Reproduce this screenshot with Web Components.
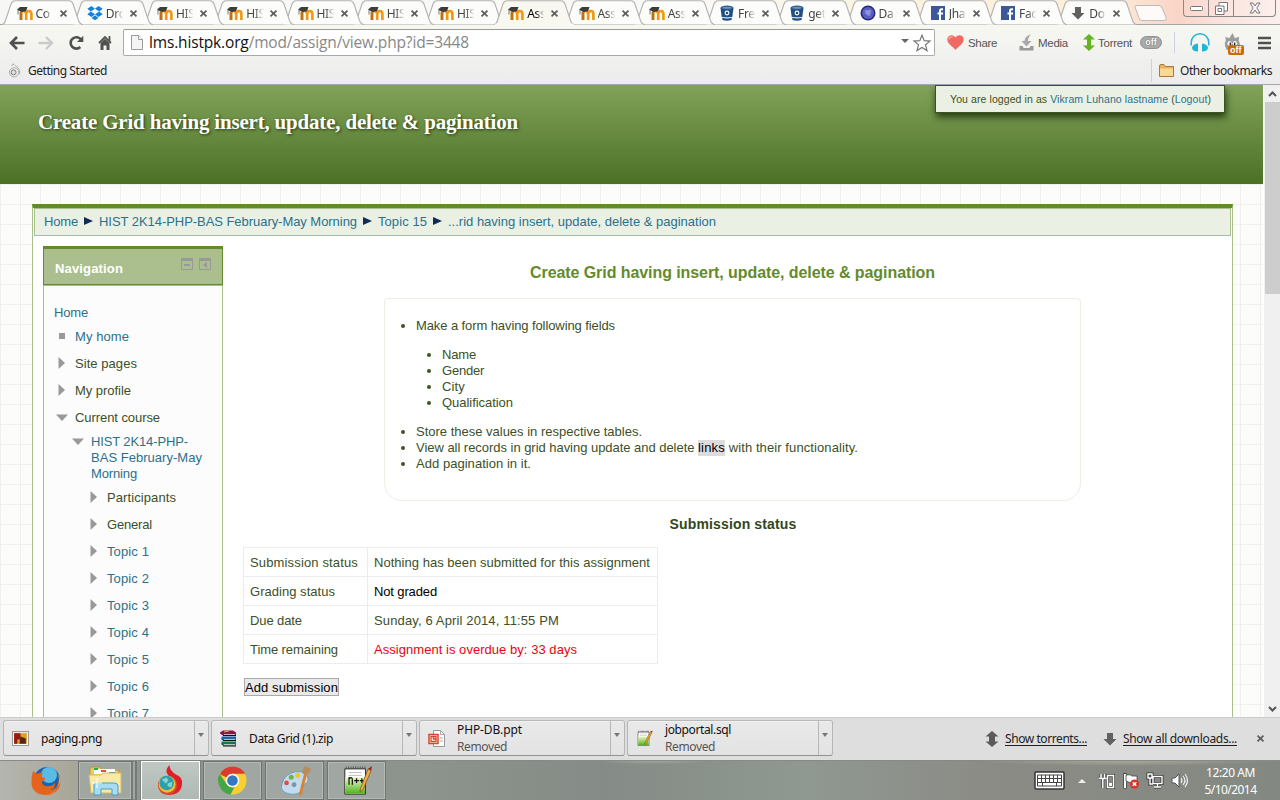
<!DOCTYPE html>
<html lang="en"><head><meta charset="utf-8"><title>Create Grid having insert, update, delete &amp; pagination</title>
<style>html,body{margin:0;width:1280px;height:800px;overflow:hidden;background:#fff}</style></head>
<body><desktop-screen></desktop-screen>
<script>
const make=(name,css,html)=>customElements.define(name,class extends HTMLElement{
  constructor(){super();this.attachShadow({mode:'open'})}
  connectedCallback(){if(!this.shadowRoot.firstChild)this.shadowRoot.innerHTML=`<style>*{box-sizing:border-box}:host{box-sizing:border-box;display:block}${css}</style>`+(typeof html==='function'?html(this):html)}
});
const f=(w,t,c='')=>`<fit-text w="${w}" class="${c}">${t}</fit-text>`;
const icon=(n,w=16,h=w)=>`<ui-icon name="${n}" w="${w}" h="${h}"></ui-icon>`;
const notepad='<path d="M3 4H25V31H3z" fill="#fff" stroke="#222"/><path d="M3.5 13H24.500V30.500H3.500z" fill="url(#ng)"/><path d="M4 3h21" stroke="#555" stroke-width="3" stroke-dasharray="1 1.500"/><path d="M7 8h14M7 11h14" stroke="#bbb"/>';
const ICONS={
moodle:['0 0 16 16','<path d="M4 15V8.500Q4 6 6.500 6T9.200 9v6M9.200 9q0-3 2.600-3T14.400 9v6" fill="none" stroke="#f09a14" stroke-width="2.700"/><path d="M2.700 6.500h2.600V15H2.700z" fill="#b5731c"/><path d="M0 4.500L3 2 10.500 2 9 6.300 5 7 1.500 5.500z" fill="#3c3c3c"/><path d="M1 5v4.500" stroke="#777"/>'],
dropbox:['0 0 16 16','<path d="M4.500 1L8 3.800 3.800 6.500.3 3.800zM11.500 1L8 3.800l4.200 2.700 3.500-2.700zM3.800 6.500L8 9.300 4.500 12 .3 9.200zM12.200 6.500L8 9.300l3.500 2.700 4.200-2.800zM4.500 13L8 10.200l3.500 2.800L8 15.300z" fill="#1081e0"/>'],
bitbucket:['0 0 16 16','<path d="M1.500 3l1.200 9h10.600l1.200-9z" fill="#205081"/><ellipse cx="8" cy="2.800" rx="6.500" ry="2.200" fill="#2a5b90"/><ellipse cx="8" cy="2.700" rx="4.600" ry="1" fill="#6f93b8"/><path d="M3 12.500h10l-.5 2.500q-4.500 1.600-9 0z" fill="#205081"/><path d="M3 12.400q5 1.600 10 0" stroke="#fff" fill="none" stroke-width=".7"/><circle cx="8" cy="8" r="1.900" fill="#205081" stroke="#fff" stroke-width="1.100"/>'],
orb:['0 0 16 16','<circle cx="8" cy="8" r="7.500" fill="#27277d"/><circle cx="8" cy="8" r="6" fill="#5a5ec0"/><path d="M5 5.500h6l-1.500 5Q5 10 5 5.500z" fill="#8d95df" stroke="#8188d8"/>'],
facebook:['0 0 16 16','<rect x="1" y="1" width="14" height="14" fill="#3b5998"/><path d="M13 4.300h-1.300Q10 4.300 10 6v9M7.500 8.500H13" fill="none" stroke="#fff" stroke-width="2"/>'],
down:['0 0 16 16','<path d="M5 2h6v6h3.500L8 14.500 1.500 8H5z" fill="#606060"/>'],
updown:['0 0 14 16','<path d="M7 0l6.500 5.500H10v5h3.500L7 16 .5 10.500H4v-5H.5z" fill="#5a5a5a"/>'],
close:['0 0 10 10','<path d="M1.700 1.700l6.600 6.600M8.300 1.700L1.700 8.300" stroke="#5d5d5d" stroke-width="1.900"/>'],
back:['0 0 16 14','<path d="M15.500 7H2.500M8 1L2 7l6 6" fill="none" stroke="#505050" stroke-width="2.700"/>'],
fwd:['0 0 16 14','<path d="M.5 7h13M8 1l6 6-6 6" fill="none" stroke="#cacaca" stroke-width="2.400"/>'],
reload:['0 0 16 16','<path d="M12.300 12A5.700 5.700 0 1 1 13 4.600" fill="none" stroke="#505050" stroke-width="2.600"/><path d="M15.300.8V7H9z" fill="#505050"/>'],
home:['0 0 14 15','<path d="M1 8L7 2l6 6M11.500 1v5" fill="none" stroke="#555" stroke-width="1.800"/><path d="M2.500 8L7 3.700 11.500 8v7h-3v-4.500h-3V15h-3z" fill="#505050"/>'],
page:['0 0 12 15','<path d="M.5.5h7l4 4v10H.5z" fill="#f4f4f4" stroke="#999"/><path d="M7.500.5v4h4" fill="#fff" stroke="#999"/>'],
star:['0 0 18 18','<path d="M9 1.200l2.200 5.500 5.800.4-4.500 3.700 1.500 5.800L9 13.400 4 16.600l1.500-5.800L1 7.100l5.800-.4z" fill="#fff" stroke="#777" stroke-width="1.200"/>'],
heart:['0 0 17 16','<path d="M8.500 15.500C6 12-.3 9 .3 4.500.8.500 6-.8 8.500 3 11-.8 16.300.5 16.700 4.500 17.200 9 11 12 8.500 15.500z" fill="#ee6a62"/><path d="M2.200 5Q2.500 2 5.500 2.500" stroke="#f7a6a0" stroke-width="1.500" fill="none"/>'],
media:['0 0 15 17','<path d="M.5 12h3l1 2h6l1-2h3v4.500H.5z" fill="#9a9a9a"/><path d="M12 .5Q6 1.500 5.500 7H2.500l5 5.500 5-5.500H9Q9 3 12 .5z" fill="#a9a9a9"/>'],
torrent:['0 0 12 17','<path d="M6 0l6 5.500H8v6h4L6 17 0 11.500h4v-6H0z" fill="#62b51c"/>'],
headphones:['0 0 20 19','<path d="M1.200 12.500V9.500a8.800 8.800 0 0 1 17.600 0V12.500" stroke="#21b4d3" stroke-width="1.500" fill="none"/><path d="M8 10.500v8Q2 18.500 2 14.500 3 11 8 10.500zM12 10.500v8q6 0 6-4-1-3.500-6-4z" fill="#21b4d3"/>'],
menu:['0 0 13 14','<path d="M0 2h13M0 7h13M0 12h13" stroke="#505050" stroke-width="2.700"/>'],
ghost:['0 0 17 20','<path d="M2.500 18Q-1 12 1.500 8L1 4l4 1.500L8.500 0 11 5.500 15.500 4 15 8q3 6-.5 10z" fill="#9c9c9c"/><ellipse cx="5.500" cy="11" rx="2.300" ry="2.700" fill="#fff"/><ellipse cx="11" cy="11" rx="2.300" ry="2.700" fill="#fff"/><path d="M5.500 10H7v3H5.500zM10 10h1.500v3H10z" fill="#222"/>'],
torch:['0 0 14 16','<circle cx="6.500" cy="10" r="5" fill="#eee" stroke="#aaa"/><circle cx="6" cy="10" r="2.700" fill="#ddd" stroke="#777"/><path d="M4 3Q5-.500 6.500 1.500T10 4q4 4 2.500 8" fill="none" stroke="#aaa"/>'],
folder:['0 0 15 13','<path d="M.5 2Q.5.5 2 .5h3l1.500 2h8v10H.5z" fill="#e9b35e" stroke="#a9793a"/><path d="M1 4.500h13v7.500H1z" fill="#fbd995"/>'],
tri:['0 0 7 12','<path d="M.5 0L7 6 .5 12z" fill="#999"/>'],
trid:['0 0 12 7','<path d="M0 .5h12L6 7z" fill="#999"/>'],
square:['0 0 6 6','<path d="M0 0h6v6H0z" fill="#999"/>'],
min:['0 0 12 12','<path d="M.5.500h11v11H.500z" fill="none" stroke="#999"/><path d="M0 0h12v3H0zM3 6h6v2H3z" fill="#999"/>'],
dock:['0 0 12 12','<path d="M.5.500h11v11H.500z" fill="none" stroke="#999"/><path d="M0 0h12v3H0zM8 4v6L4 7z" fill="#999"/>'],
crumb:['0 0 9 8','<path d="M0 0L9 4 0 8z" fill="#112c54"/>'],
png:['0 0 16 16','<path d="M.5 1.500h15v13H.500z" fill="#fff" stroke="#999"/><path d="M2 3h12v10H2z" fill="#d9a128"/><path d="M2 3h6v6H5v4H2z" fill="#941a16"/><path d="M8 6l5 2v5H7z" fill="#5a2410"/>'],
zip:['0 0 17 16','<path d="M0 2l3-2h10l3 2v3H3L0 3z" fill="#8d134d"/><path d="M2 6h14v4H3Q0 9 2 6z" fill="#1d62ae"/><path d="M2 11h14v4H3q-3-1-1-4z" fill="#127b43"/><path d="M3 5h13M3 10h13M3 15.500h13" stroke="#111"/><path d="M4 4h11M4 9h11M4 14h11" stroke="#ddd" stroke-width=".8"/><path d="M4 1.500l5-1" stroke="#d9b23c"/>'],
ppt:['0 0 17 17','<path d="M5.500.5h7l4 4v12h-11z" fill="#fff" stroke="#999"/><path d="M12.500.500v4h4M12 8h3M12 11h3" fill="none" stroke="#aaa"/><path d="M1 4.500h9v9H1z" fill="#fff" stroke="#d24726" stroke-width="1.500"/><path d="M3 6.500h5v5H3zM5.500 7v2h2" fill="none" stroke="#d24726" stroke-width="1.300"/>'],
sql:['0 0 32 34',notepad+'<path d="M28 3L17 24l-1 5 4-3L31 5z" fill="#eca824" stroke="#80511a"/><path d="M28 3l3 2 1-4z" fill="#9a2020"/>'],
npp:['0 0 32 34',notepad+'<path d="M7.500 21v-8M7.500 14.500q3.500-2.500 3.500 1V21M13 16.500h5M15.500 14v5M19 16.500h4.500M21.200 14v5" stroke="#111" stroke-width="1.300" fill="none"/><path d="M28 4l-8 20-1 5 3.500-3L31 6z" fill="#eab044" stroke="#80511a" stroke-width=".8"/><path d="M28 4l3 2 1-5z" fill="#9a2020"/>'],
firefox:['0 0 30 30','<circle cx="16" cy="14" r="13" fill="#1c62b2"/><circle cx="18" cy="9" r="8" fill="#59bce5"/><path d="M2 5l4 3q3-2 6-1-2 2-1 4 4 1 3 3-3 0-3 3 2 4 7 3 5 0 6-4 1 7-6 8 7 0 9-6 2-6 0-10 4 8 1 14-5 8-14 7Q1 28 .500 17 0 11 2 5z" fill="#e5641c"/><path d="M27 7q4 9-1 16-4 5-11 6 9-1 12-8 2-6 0-14z" fill="#f9c431"/>'],
explorer:['0 0 32 30','<path d="M1 3q0-2 2-2h8l2 3h17v20H1z" fill="#e5c963" stroke="#b69742"/><path d="M5 3h21v5H5z" fill="#fff"/><path d="M5 2h4v2H5z" fill="#27ad41"/><path d="M12 4h5v2h-5z" fill="#e64c35"/><path d="M20 6h6v2h-6z" fill="#3287d5"/><path d="M0 9h12l2-2h18v20H2z" fill="#f8e9a4" stroke="#d5bc69"/><path d="M5 29V19q0-2 3-2h17q4 0 4 3v9h-6v-6H12v6z" fill="#a7dcf4" stroke="#4a9dc6"/><path d="M8 12v10M3 17h10" stroke="#fff"/>'],
torchbig:['0 0 28 32','<path d="M13 0Q9 4 10 8q3 4 4 7 3 9-3 16 15 0 15-13 0-6-6-8Q13 6 13 0z" fill="#df202a"/><circle cx="11" cy="21" r="10" fill="#e3432a"/><circle cx="10.500" cy="20" r="8.800" fill="#efbd32"/><circle cx="10" cy="18.500" r="7.500" fill="#2e9fac"/><path d="M5 15l5-2 2 3-3 3zM11 19l5-2-1 6-4-1z" fill="#83d4d4"/>'],
chrome:['0 0 30 30','<circle cx="15" cy="15" r="14.500" fill="#f9cf31"/><path d="M2 8.500Q6 .5 15 .5t13 7.500H15a7 7 0 0 0-6 4z" fill="#dc3c30"/><path d="M2 8.500L9 19q3 4 8 3l-4 7.500Q5 29 1.500 21T2 8.500z" fill="#45a647"/><circle cx="15" cy="15" r="7" fill="#fff"/><circle cx="15" cy="15" r="5.500" fill="#3377bf"/>'],
paint:['0 0 32 32','<path d="M2 19Q5 8 17 6q12-1 13 8 0 5-6 6-3 2 0 5-3 6-13 5Q-1 28 2 19z" fill="#c0dcee" stroke="#7199b4"/><circle cx="7" cy="18" r="2.500" fill="#e34d40"/><circle cx="12" cy="12" r="2.700" fill="#72b645"/><circle cx="19" cy="10" r="2.700" fill="#ecc82e"/><circle cx="15" cy="20" r="2.600" fill="#7998a8"/><path d="M26 7l3 1-6 23-2 1 0-5z" fill="#df7e2c"/><path d="M24 8Q24 2 27 0l6 3q-1 5-5 6z" fill="#b88b5e"/>'],
keyboard:['0 0 31 19','<rect x="1" y="1" width="29" height="17" rx="1" fill="#fff" stroke="#333" stroke-width="1.500"/><path d="M3.500 4h24v11h-24zM4 7.500h23M4 11.500h23M7.500 4v7.500M11.500 4v7.500M15.500 4v7.500M19.500 4v7.500M23.500 4v7.500M8.500 12v3M22.500 12v3" fill="none" stroke="#444"/>'],
battery:['0 0 16 16','<path d="M8.500 2.500h6v12h-6zM2 1v5M5.500 1v5M0 5.500h7.500M3.800 6v9" fill="none" stroke="#444" stroke-width="3"/><path d="M8.500 2.500h6v12h-6zM2 1v5M5.500 1v5M0 5.500h7.500M3.800 6v9" fill="none" stroke="#fff" stroke-width="1.500"/><path d="M10 10h3v3h-3z" fill="#fff"/>'],
flag:['0 0 17 16','<path d="M2 0v15.500" stroke="#444" stroke-width="3.500"/><path d="M2 1v14" stroke="#fff" stroke-width="2"/><path d="M3 2q5-1 6 1h5v7H8L3 8z" fill="#fff" stroke="#444" stroke-width=".8"/><circle cx="11.500" cy="11" r="4.500" fill="#db3027"/><path d="M9.700 9.200l3.600 3.600m0-3.600l-3.600 3.600" stroke="#fff" stroke-width="1.500"/>'],
net:['0 0 16 15','<path d="M6 3.500h9v7H6zM10.500 11v3M7 14h7M1 1h4v4H1zM3 5v6h3" fill="none" stroke="#333" stroke-width="3"/><path d="M6 3.500h9v7H6zM10.500 11v3M7 14h7M1 1h4v4H1zM3 5v6h3" fill="none" stroke="#fff" stroke-width="1.400"/>'],
sound:['0 0 17 15','<path d="M1 5h3l4-4v13l-4-4H1z" fill="#fff" stroke="#555"/><path d="M10 5q2 2.500 0 5M12 3q4 4.500 0 9M14 1q5 6.500 0 13" fill="none" stroke="#eee" stroke-width="1.100"/>']};
make('ui-icon',':host{flex:none;line-height:0}svg{display:block;overflow:visible}',e=>{const i=ICONS[e.getAttribute('name')],w=e.getAttribute('w'),h=e.getAttribute('h');e.style.width=w+'px';return `<svg width="${w}" height="${h}" viewBox="${i[0]}"><defs><linearGradient id="ng" x2="0" y2="1"><stop stop-color="#eaf7c8"/><stop offset="1" stop-color="#4fb41b"/></linearGradient></defs>${i[1]}</svg>`});

make('browser-tab',':host{position:relative;width:70.250px;height:25px;flex:none}svg{position:absolute;left:2px;top:0;overflow:visible}.c{position:relative;display:flex;align-items:center;height:25px;padding-left:16.500px;padding-top:1px}.t{font:12px "Noto Sans",sans-serif;width:17px;margin:0 6px 0 3px;overflow:hidden;white-space:nowrap;color:#444;-webkit-mask:linear-gradient(90deg,#000 50%,#0001);letter-spacing:-.3px}:host([active]) .t{color:#000}',
e=>{const a=e.hasAttribute('active');return `<svg width="81" height="25"><path d="M0 24.500Q2.500 24 3.500 20.500L9 4Q10 .8 13 .8H67Q70 .8 71 4L76.500 20.500Q78 24.500 81 24.500" fill="${a?'#f8f8f0':'#fcfcfb'}" stroke="#b2b2b2" stroke-width="1.100"/>${a?'<path d="M1 24.500H80" stroke="#f8f8f0" stroke-width="2"/>':''}</svg><div class="c">${icon(e.getAttribute('icon'))}<span class="t">${e.textContent}</span>${icon('close',9)}</div>`});
const tabs=[['moodle','Co'],['dropbox','Dro'],...Array(5).fill(['moodle','HIS']),['moodle','Ass',1],['moodle','Ass'],['moodle','Ass'],['bitbucket','Fre'],['bitbucket','get'],['orb','Da'],['facebook','Jha'],['facebook','Fac'],['down','Do']];
make('tab-strip',':host{display:flex;height:25px;background:linear-gradient(90deg,#f7f7f6 0,#faf9f4 55%,#fdf3dd 72%,#fdeeda 86%,#f9d5c8 92%,#fbe5df 96%,#fcefed);border-bottom:1px solid #a5a5a5}.new{margin:5px 0 0 10px}.win{display:flex;margin-left:auto;margin-right:4px;height:17px;border:1px solid #888;border-top:0;border-radius:0 0 4px 4px}.win span{display:flex;align-items:center;justify-content:center;width:25px;border-right:1px solid #888}.win span:last-child{width:41px;border:0}',
tabs.map((t,i)=>`<browser-tab style="z-index:${t[2]?60:40-i}" icon="${t[0]}" ${t[2]?'active':''}>${t[1]}</browser-tab>`).join('')+`<svg class="new" width="34" height="16"><path d="M1 2Q.5.5 3 .5H25Q27 .5 28 3L32 12Q33 15.500 30 15.500H8Q6 15.500 5 13z" fill="#fdfaf7" stroke="#bbb"/></svg><div class="win"><span><svg width="13" height="5"><rect x=".5" y=".5" width="12" height="4" rx="1" fill="#fff" stroke="#777"/></svg></span><span><svg width="13" height="13"><path d="M4 .5h8.500V9H4z" fill="#fff" stroke="#777"/><path d="M.5 4H9v8.500H.500zM3 6.500h3.500v3H3z" fill="#fff" stroke="#777"/></svg></span><span><svg width="12" height="12"><path d="M1 1h3l2 3 2-3h3L7.800 6l3.200 5H8L6 8l-2 3H1l3.200-5z" fill="#fff" stroke="#777"/></svg></span></div>`);
make('tool-bar',`:host{height:35px;display:flex;align-items:center;padding-left:9px;font:11.500px "Liberation Sans",sans-serif;color:#555}.url{margin-left:11px;width:812px;height:27px;border:1px solid #aaa;border-top-color:#999;border-radius:2px;background:#fff;display:flex;align-items:center;padding-left:7px;font:15.500px "Open Sans",sans-serif;color:#888;white-space:nowrap}.url b{font-weight:400;color:#111}.url fit-text{margin-left:6px;margin-top:-1px}.arr{border:4px solid transparent;border-top-color:#666;border-bottom:0;margin:-3px 4px 0 auto}.url ui-icon:last-child{margin-right:3px}.off{font:bold 9px "Liberation Sans";color:#fff;background:#aaa;border:1px solid #909090;border-radius:8px;width:22px;height:13px;line-height:10px;text-align:center;margin-left:8px;text-shadow:0 0 1px #333}.sep{height:21px;border-left:1px solid #ccd3dc;margin-left:12px}.g{position:relative}.g i{position:absolute;left:4px;top:12px;background:#cd6a08;color:#fff;font:bold 9px/10px "Liberation Sans";padding:0 2px;border-radius:2px}`,
icon('back',16,14)+'<span style="width:13px"></span>'+icon('fwd',16,14)+'<span style="width:14px"></span>'+icon('reload')+'<span style="width:14px"></span>'+icon('home',14,15)+`<div class="url">${icon('page',12,15)}${f(320,'<b>lms.histpk.org</b>/mod/assign/view.php?id=3448')}<span class="arr"></span>${icon('star',18)}</div><span style="width:12px"></span>${icon('heart',17)}<span style="width:4px"></span>${f(29,'Share')}<span style="width:22px"></span>${icon('media',15,17)}<span style="width:4px"></span>${f(30,'Media')}<span style="width:15px"></span>${icon('torrent',12,17)}<span style="width:3px"></span>${f(34,'Torrent')}<span class="off">off</span><span class="sep"></span><span style="width:15px"></span>${icon('headphones',20,19)}<span style="width:14px"></span><span class="g">${icon('ghost',17,19)}<i>off</i></span><span style="width:17px"></span>${icon('menu',13,14)}`);
make('bookmark-bar',':host{height:25px;display:flex;align-items:center;padding:0 8px 5px;font:12px "Noto Sans",sans-serif;color:#222}.l{margin-left:7px}.r{margin-left:auto;display:flex;align-items:center;border-left:1px solid #cbd3dc;padding-left:7px;height:23px;gap:6px}',
icon('torch',13,15)+f(79,'Getting Started','l')+`<div class="r">${icon('folder',15,13)}${f(92,'Other bookmarks')}</div>`);
make('browser-chrome',':host{height:85px;background:linear-gradient(#f8f8f2 24px,#f1f1ef 55px,#ececed);border-bottom:1px solid #a6a6aa}','<tab-strip></tab-strip><tool-bar></tool-bar><bookmark-bar></bookmark-bar>');

make('page-header',':host{height:99px;position:relative;background:linear-gradient(#80a259,#4c7125);padding:25px 38px;color:#fff;font:bold 21px/24px "Liberation Serif",serif;text-shadow:1px 1px 3px #263912}.login{position:absolute;left:935px;top:0;width:290px;height:28px;background:#ebf0e5;border:1px solid #38541b;box-shadow:1px 4px 7px #263b13;padding:0 14px;font:10.500px/27px "Liberation Sans",sans-serif;color:#3c5120;text-shadow:none}a{color:#2c708a}',
f(480,'Create Grid having insert, update, delete &amp; pagination')+`<div class="login">${f(261,'You are logged in as <a>Vikram Luhano lastname</a> (<a>Logout</a>)')}</div>`);
make('bread-crumb',':host{display:flex;align-items:center;gap:6px;height:28px;border:1px solid #a9c08b;background:#ebf0e5;padding:0 9px 2px;margin:0 1px;color:#2c708a}',
[f(34,'Home'),f(258,'HIST 2K14-PHP-BAS February-May Morning'),f(49,'Topic 15'),f(268,'...rid having insert, update, delete &amp; pagination')].join(icon('crumb',9,8)));
make('nav-item',':host{display:flex;line-height:16px;margin-bottom:11px;color:#2c708a}:host([plain]){color:#3d4f28}.i{width:13px;height:16px;display:flex;justify-content:center;align-items:center;margin-right:7px;flex:none;padding-bottom:2px}',e=>{const k=e.getAttribute('k');return `<span class="i">${k==='square'?icon(k,6):k==='tri'?icon(k,7,12):icon(k,12,7)}</span><span><slot></slot></span>`});
const it=(k,w,t,plain,l=0,s='')=>`<nav-item k="${k}" ${plain?'plain':''} style="padding-left:${l}px;${s}">${Array.isArray(t)?t.map((x,i)=>f(w[i],x)).join('<br>'):f(w,t)}</nav-item>`;
make('nav-block',':host{width:180px;height:520px;background:#fcfcfc;border:1px solid #a9bf8b;border-top:0;flex:none}.h{margin:0 -1px;height:39px;border:1px solid #638b2c;border-top-width:3px;background:#aabf8d;box-shadow:0 1px #a9bf8b;display:flex;align-items:flex-start;padding:8px 11px 0;color:#fff;font-weight:bold;line-height:24px}.h ui-icon{margin-top:1px}.h ui-icon:first-of-type{margin-left:auto;margin-right:6px}.b{padding:20px 0 0 11px;line-height:16px}.b>fit-text{color:#2c708a;display:block;margin:0 0 8px -1px}',
`<div class="h">${f(68,'Navigation')}${icon('min',12)}${icon('dock',12)}</div><div class="b">${f(34,'Home')}`+it('square',54,'My home')+it('tri',62,'Site pages',1)+it('tri',56,'My profile',1)+it('trid',85,'Current course',1,0,'margin-bottom:8px')+it('trid',[97,111,46],['HIST 2K14-PHP-','BAS February-May','Morning'],0,16,'margin-bottom:8px')+it('tri',69,'Participants',1,32)+it('tri',45,'General',1,32)+[1,2,3,4,5,6,7].map(n=>it('tri',42,'Topic '+n,0,32)).join('')+'</div>');
make('intro-box',':host{width:697px;height:203px;border:1px solid #eeeee4;border-radius:4px 4px 18px 18px;margin:15px auto 0;padding:19px 0 0 31px;line-height:16px;color:#3d4f28}ul{margin:0;padding:0;list-style:none}ul ul{margin:13px 0;padding-left:26px}li{position:relative}li::before{content:"";position:absolute;left:-15px;top:6px;width:4px;height:4px;border-radius:50%;background:#3d5520}mark{background:#dcdcdc;color:#000;display:inline-block;height:16px;vertical-align:top}',
`<ul><li>${f(199,'Make a form having following fields')}<ul><li>${f(34,'Name')}</li><li>${f(42,'Gender')}</li><li>${f(23,'City')}</li><li>${f(71,'Qualification')}</li></ul></li><li>${f(226,'Store these values in respective tables.')}</li><li>${f(282,'View all records in grid having update and delete&nbsp;')}<mark>${f(27,'links')}</mark>${f(133,'&nbsp;with their functionality.')}</li><li>${f(115,'Add pagination in it.')}</li></ul>`);
make('status-table','table{border-collapse:collapse;width:415px;table-layout:fixed}td{border:1px solid #ececec;height:29px;padding:0 6px;white-space:nowrap}td:first-child{width:124px}.k{color:#000}.r{color:#f00010}',
'<table>'+[[108,'Submission status',276,'Nothing has been submitted for this assignment',''],[85,'Grading status',63,'Not graded','k'],[52,'Due date',185,'Sunday, 6 April 2014, 11:55 PM',''],[88,'Time remaining',203,'Assignment is overdue by: 33 days','r']].map(r=>`<tr><td>${f(r[0],r[1])}</td><td class="${r[4]}">${f(r[2],r[3])}</td></tr>`).join('')+'</table>');
make('course-main',':host{flex:1;padding:17px 10px 0 20px;color:#3d4f28}h2{margin:0;font:bold 16px/20px "Liberation Sans";color:#638b2c;text-align:center}h3{margin:13px 0 13px;padding-left:1px;font:bold 14px/20px "Liberation Sans";text-align:center;color:#32461b}.btn{display:block;margin:14px 0 0 1px;border:1px solid #aaa;background:#e9e9e9;color:#000;height:18px;width:95px;line-height:17px}',
`<h2>${f(405,'Create Grid having insert, update, delete &amp; pagination')}</h2><intro-box></intro-box><h3>${f(127,'Submission status')}</h3><status-table></status-table><span class="btn">${f(93,'Add submission')}</span>`);
make('scroll-bar',':host{width:17px;background:#f0f0f0;border-left:1px solid #fff;display:flex;flex-direction:column;align-items:center}.t{width:15px;height:192px;background:#cdcdcd}.a{height:17px;display:flex;align-items:center}.d{margin-top:auto}',
'<span class="a"><svg width="9" height="6"><path d="M1 5L4.500 1.500 8 5" fill="none" stroke="#555" stroke-width="2"/></svg></span><span class="t"></span><span class="a d"><svg width="9" height="6"><path d="M1 1l3.500 3.500L8 1" fill="none" stroke="#555" stroke-width="2"/></svg></span>');
make('web-page',':host{height:632px;display:flex;overflow:hidden;font:13px "Liberation Sans",sans-serif}.v{flex:1;height:632px;overflow:hidden;background:linear-gradient(90deg,#f0f0f0 1px,transparent 1px) 0 -1px/20px 20px,linear-gradient(#f0f0f0 1px,#fcfcfb 1px) 0 -1px/20px 20px}.p{margin:20px 0 0 32px;width:1201px;height:600px;background:#fff;border:1px solid #a9c08b;border-top:4px solid #638b2c}.c{display:flex;padding:10px 0 0 10px}',
`<div class="v"><page-header></page-header><div class="p"><bread-crumb></bread-crumb><div class="c"><nav-block></nav-block><course-main></course-main></div></div></div><scroll-bar></scroll-bar>`);

make('download-item',':host{width:206px;height:36px;display:flex;align-items:center;border:1px solid #aaa;border-color:#b8b8b8 #b5b5b5 #929292;border-radius:3px;background:linear-gradient(#e9e9e9,#e3e3e3);padding-left:8px;flex:none;line-height:17px;box-shadow:inset 0 1px #f2f2f2}.t{margin-left:12px;display:flex;flex-direction:column;align-items:flex-start;color:#111}.s{color:#555}.a{margin-left:auto;width:14px;height:34px;border-left:1px solid #b8b8b8;padding:12px 0 0 3px}.a i{display:block;width:0;border:3px solid transparent;border-top:4px solid #777;border-bottom:0}',
e=>icon(e.getAttribute('icon'),17)+`<span class="t">${f(e.getAttribute('w'),e.textContent)}${e.hasAttribute('removed')?f(50,'Removed','s'):''}</span><span class="a"><i></i></span>`);
make('download-bar',':host{height:44px;border-top:1px solid #ccc;border-bottom:1px solid #898989;background:#dedede;display:flex;padding:2px 15px 0 3px;gap:2px;font:12px "Noto Sans",sans-serif;color:#222}.r{margin-left:auto;display:flex;align-items:center;height:37px;text-decoration:underline;text-underline-offset:2px}',
'<download-item icon="png" w="61">paging.png</download-item><download-item icon="zip" w="84">Data Grid (1).zip</download-item><download-item icon="ppt" w="65" removed>PHP-DB.ppt</download-item><download-item icon="sql" w="66" removed>jobportal.sql</download-item>'+`<div class="r">${icon('updown',14,16)}<span style="width:6px"></span>${f(82,'Show torrents...')}<span style="width:15px"></span>${icon('down',16)}<span style="width:5px"></span>${f(114,'Show all downloads...')}<span style="width:19px"></span>${icon('close',9)}</div>`);
make('task-button',':host{width:59px;height:39px;border:1px solid #6f7571;background:#a0a6a2;box-shadow:inset 0 0 0 1px #b4b9b5;display:flex;justify-content:center;align-items:center;flex:none}:host([active]){background:linear-gradient(#c0c8c3,#b0b8b3);border-color:#fff;box-shadow:none;outline:1px solid #7b817d}:host([flat]){background:none;border:0;box-shadow:none}:host([stack]){width:59px;border-right:6px double #747a76;padding-right:1px}','<slot></slot>');
make('task-bar',':host{height:39px;display:flex;align-items:center;background:radial-gradient(ellipse at 51% 0,#9da99b,transparent 6%),radial-gradient(ellipse at 88% 0,#aaa894,transparent 9%),linear-gradient(90deg,#b4b5af 0,#aaa99b 5%,#8b9190 13%,#8d948d 32%,#858b86 47%,#8f9891 63%,#8b8b85 78%,#838982 100%);padding:0 23px 0 16px;font:12px/17px "Noto Sans",sans-serif;color:#fff}.tr{margin-left:auto;display:flex;align-items:center}.up{border:4px solid transparent;border-bottom-color:#eee;border-top:0;margin:0 13px}.cl{margin-left:16px;text-align:center;display:flex;flex-direction:column;align-items:center;width:53px}',
`<task-button flat>${icon('firefox',30)}</task-button><task-button stack style="margin-left:3px">${icon('explorer',32,30)}</task-button><task-button active style="margin-left:4px">${icon('torchbig',27,31)}</task-button>`+[['chrome',29,29],['paint',32,30],['npp',30,32]].map(i=>`<task-button style="margin-left:3px">${icon(...i)}</task-button>`).join('')+`<div class="tr">${icon('keyboard',31,19)}<i class="up"></i>${icon('battery',16)}<span style="width:8px"></span>${icon('flag',17,16)}<span style="width:7px"></span>${icon('net',16,15)}<span style="width:8px"></span>${icon('sound',17,15)}<span class="cl">${f(49,'12:20 AM')}${f(52,'5/10/2014')}</span></div>`);
make('desktop-screen',':host{width:1280px;height:800px;overflow:hidden}','<browser-chrome></browser-chrome><web-page></web-page><download-bar></download-bar><task-bar></task-bar>');
/* Text run that spreads its letter spacing to a given width. */
customElements.define('fit-text',class extends HTMLElement{
  constructor(){super();this.attachShadow({mode:'open'}).innerHTML='<style>:host{display:inline-block;white-space:nowrap;vertical-align:top;flex:none}</style><slot></slot>'}
  connectedCallback(){const w=+this.getAttribute('w'),n=this.textContent.length,r=document.createRange();r.selectNodeContents(this);const m=r.getBoundingClientRect().width;if(m)this.style.letterSpacing=((w-m)/n)+'px'}
});
</script></body></html>
